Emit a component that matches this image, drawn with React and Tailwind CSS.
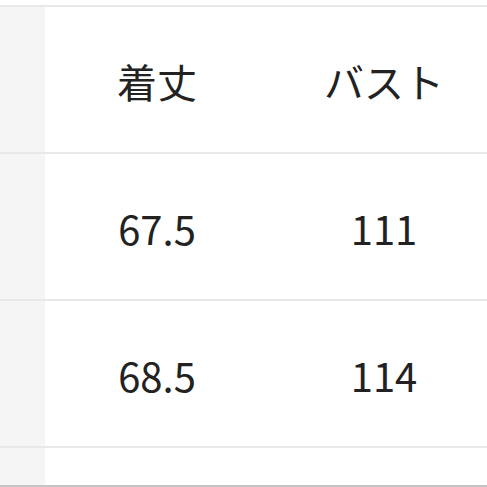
const header = ['着丈', 'バスト'];
const rows = [
  ['67.5', '111'],
  ['68.5', '114'],
];

function Row({ cells }) {
  return (
    <div className="flex h-[147px] border-b-2 border-[#e8e8e8]">
      <div className="w-[45px] shrink-0 bg-[#f5f5f5]" />
      <div className="w-[224px] shrink-0 flex items-center justify-center pt-[3px]">{cells[0]}</div>
      <div className="w-[230px] shrink-0 flex items-center justify-center pt-[3px]">{cells[1]}</div>
    </div>
  );
}

export default function App() {
  return (
    <div
      className="w-[487px] h-[487px] overflow-hidden bg-white text-[#222] text-[40px] leading-none"
      style={{ fontFamily: '"Noto Sans CJK JP", "Noto Sans", sans-serif' }}
    >
      <div className="pt-[5px]">
        <div className="w-[500px] border-t-2 border-[#e8e8e8]">
          <Row cells={header} />
          {rows.map((r, i) => (
            <Row key={i} cells={r} />
          ))}
          <div className="flex h-[39px] border-b-2 border-[#c4c4c4]">
            <div className="w-[45px] shrink-0 bg-[#f5f5f5]" />
          </div>
        </div>
      </div>
    </div>
  );
}
